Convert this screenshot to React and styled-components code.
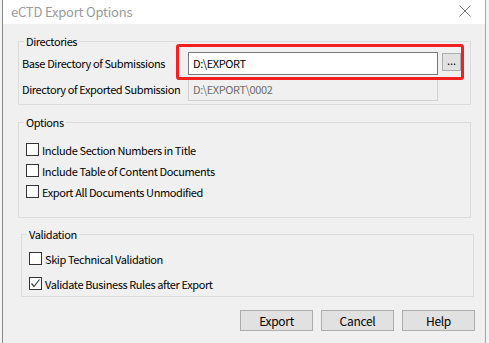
import React from "react";
import styled, { createGlobalStyle } from "styled-components";

const Global = createGlobalStyle`
  html, body { margin: 0; padding: 0; background: #f4f4f4; }
  body {
    font-family: "Noto Sans CJK SC", "Noto Sans", sans-serif;
    font-size: 11px;
    letter-spacing: -0.4px;
    color: #000;
  }
  * { box-sizing: border-box; }
`;

const Screen = styled.div`
  width: 489px;
  height: 343px;
  display: flex;
  padding-left: 2px;
  background: #f4f4f4;
  overflow: hidden;
`;

const Dialog = styled.div`
  width: 484px;
  height: 343px;
  display: flex;
  flex-direction: column;
  border-left: 1px solid #8a8a8a;
  border-right: 1px solid #a8a8a8;
  background: #f0f0f0;
`;

const TitleBar = styled.div`
  height: 24px;
  flex: none;
  background: #fff;
  display: flex;
  align-items: center;
  justify-content: space-between;
  padding: 0 8px 2px 8px;
`;

const Title = styled.span`
  font-size: 13px;
  letter-spacing: -0.2px;
  color: #9a9a9a;
`;

const Close = styled.svg`
  width: 12px;
  height: 12px;
  margin-right: 6px;
`;

const Body = styled.div`
  display: flex;
  flex-direction: column;
  padding: 17px 0 0 15px;
`;

const Group = styled.div`
  position: relative;
  margin-left: ${(p) => p.$shift || 0}px;
  margin-top: ${(p) => p.$top || 0}px;
  width: 453px;
  height: ${(p) => p.$h}px;
  border: 1px solid #dcdcdc;
  padding: ${(p) => p.$pad};
  display: flex;
  flex-direction: column;
`;

const Caption = styled.span`
  position: absolute;
  top: -8px;
  left: 5px;
  padding: 0 2px;
  line-height: 14px;
  background: #f0f0f0;
`;

const DirRow = styled.div`
  display: flex;
  align-items: center;
  height: 23px;
  margin-top: ${(p) => p.$mt || 0}px;
`;

const Label = styled.span`
  width: 166px;
  flex: none;
  white-space: nowrap;
  padding-bottom: 1px;
`;

const Input = styled.div`
  width: 250px;
  height: 23px;
  border: 1px solid ${(p) => (p.$disabled ? "#d2d2d2" : "#7a7a7a")};
  background: ${(p) => (p.$disabled ? "#f0f0f0" : "#fff")};
  color: ${(p) => (p.$disabled ? "#6d6d6d" : "#000")};
  display: flex;
  align-items: center;
  padding: 0 0 1px 4px;
`;

const Browse = styled.div`
  width: 19px;
  height: 18px;
  margin-left: 4px;
  border: 1px solid #adadad;
  background: #e1e1e1;
  display: flex;
  align-items: center;
  justify-content: center;
  font-size: 11px;
  line-height: 1;
  align-self: flex-start;
  margin-top: 1px;
  padding-bottom: 3px;
  letter-spacing: 0;
`;

const Highlight = styled.div`
  position: absolute;
  left: 157px;
  top: 2px;
  width: 288px;
  height: 36px;
  border: 3px solid #f41f1f;
  border-radius: 3px;
  pointer-events: none;
`;

const CheckRow = styled.label`
  display: flex;
  align-items: center;
  height: ${(p) => p.$h}px;
  gap: 3px;
  white-space: nowrap;
`;

const Box = styled.span`
  width: 13px;
  height: 13px;
  flex: none;
  border: 1px solid #333;
  background: #fff;
  display: flex;
  align-items: center;
  justify-content: center;
`;

const Footer = styled.div`
  display: flex;
  justify-content: flex-end;
  gap: 8px;
  padding-right: 10px;
  margin-top: 13px;
`;

const Button = styled.button`
  width: 73px;
  height: 21px;
  border: 1px solid #adadad;
  background: #e1e1e1;
  font-family: inherit;
  font-size: 12px;
  letter-spacing: -0.3px;
  color: #000;
  padding: 0 0 1px;
`;

const Check = ({ checked, label, h = 21 }) => (
  <CheckRow $h={h}>
    <Box>
      {checked && (
        <svg width="11" height="11" viewBox="0 0 11 11">
          <path d="M1.5 5.5 L4 8.5 L9.5 1.5" fill="none" stroke="#444" strokeWidth="1.2" />
        </svg>
      )}
    </Box>
    {label}
  </CheckRow>
);

export default function App() {
  return (
    <>
      <Global />
      <Screen>
        <Dialog>
          <TitleBar>
            <Title>eCTD Export Options</Title>
            <Close viewBox="0 0 12 12">
              <path d="M0.5 0.5 L11.5 11.5 M11.5 0.5 L0.5 11.5" stroke="#777" strokeWidth="1" />
            </Close>
          </TitleBar>
          <Body>
            <Group $h={64} $pad="10px 0 0 3px">
              <Caption>Directories</Caption>
              <DirRow>
                <Label>Base Directory of Submissions</Label>
                <Input>D:\EXPORT</Input>
                <Browse>...</Browse>
              </DirRow>
              <DirRow $mt={3}>
                <Label>Directory of Exported Submission</Label>
                <Input $disabled>D:\EXPORT\0002</Input>
              </DirRow>
              <Highlight />
            </Group>
            <Group $h={96} $top={17} $pad="16px 0 0 7px">
              <Caption>Options</Caption>
              <Check label="Include Section Numbers in Title" />
              <Check label="Include Table of Content Documents" />
              <Check label="Export All Documents Unmodified" />
            </Group>
            <Group $h={63} $top={16} $shift={3} $pad="11px 0 0 7px">
              <Caption>Validation</Caption>
              <Check label="Skip Technical Validation" h={25} />
              <Check checked label="Validate Business Rules after Export" h={25} />
            </Group>
          </Body>
          <Footer>
            <Button>Export</Button>
            <Button>Cancel</Button>
            <Button>Help</Button>
          </Footer>
        </Dialog>
      </Screen>
    </>
  );
}
